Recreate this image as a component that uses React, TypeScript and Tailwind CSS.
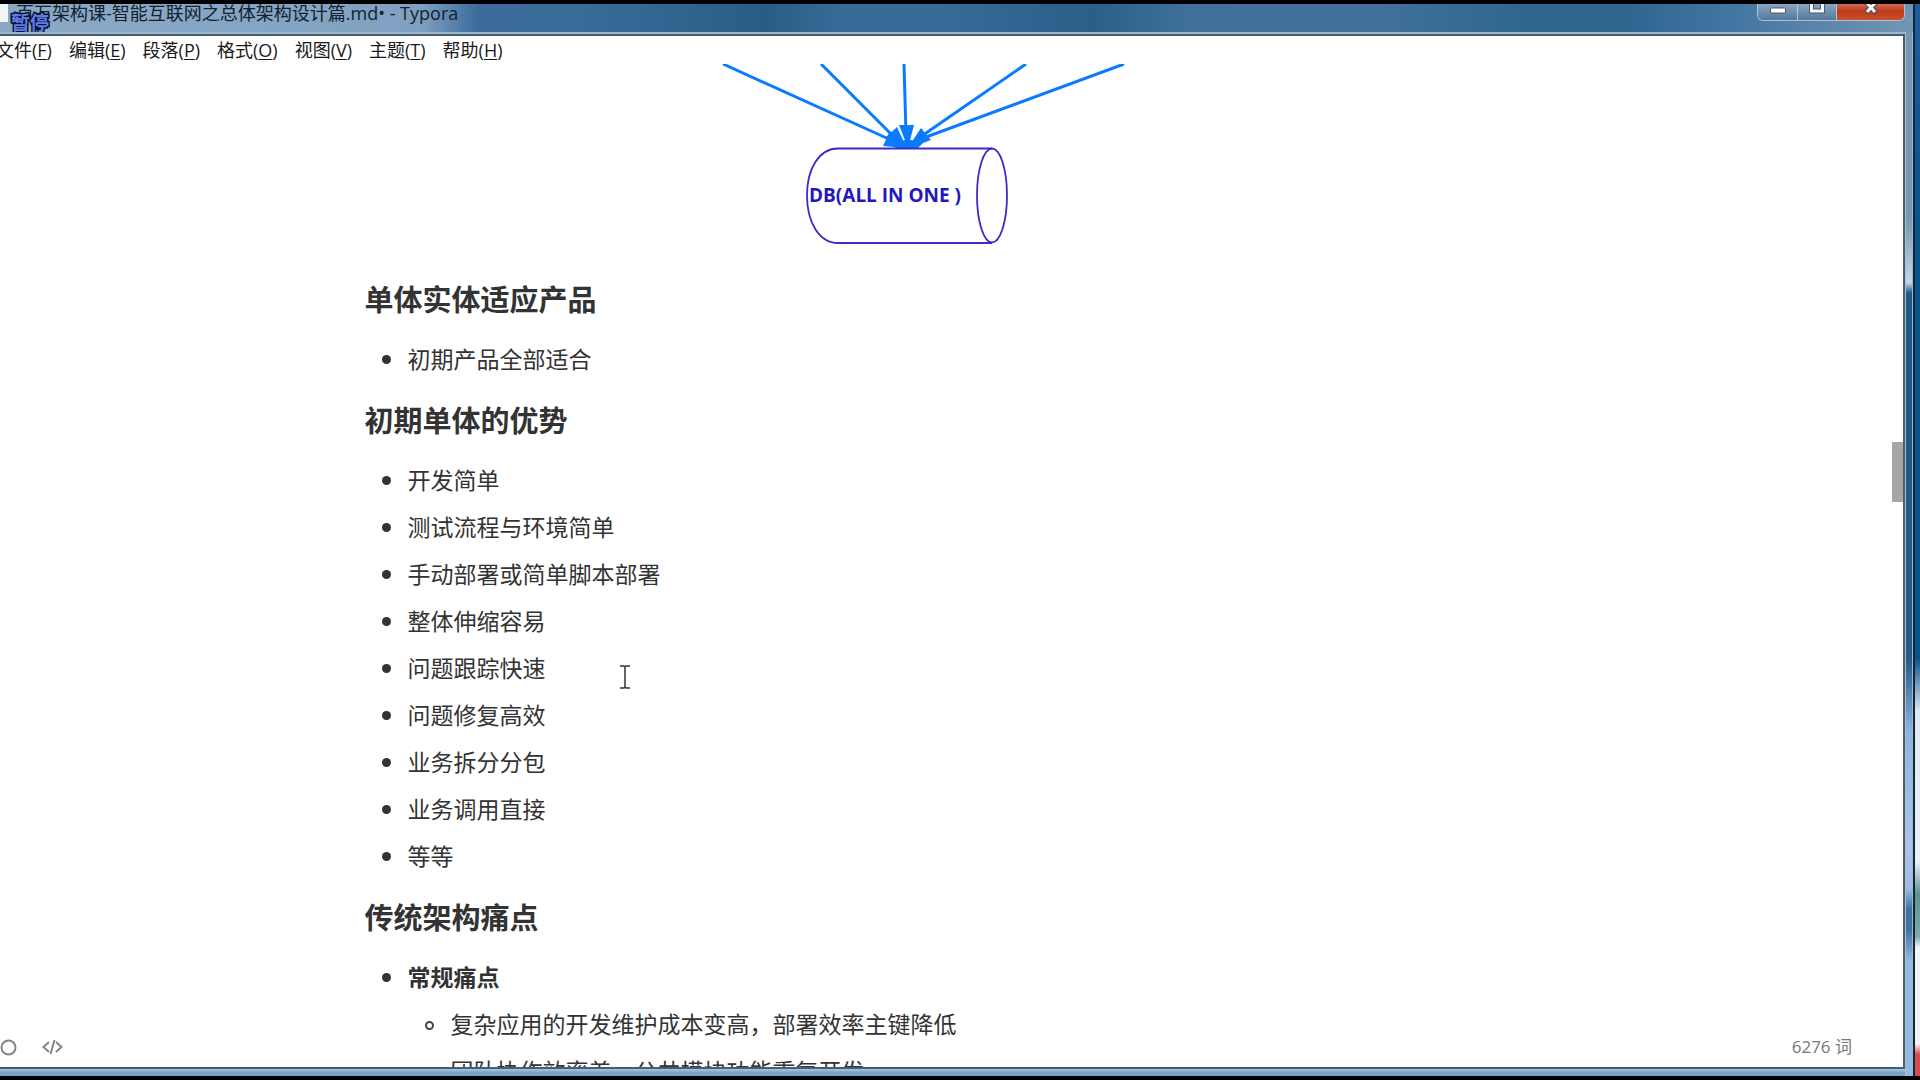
import type { ReactNode } from "react"

const menus = [
    { label: "文件", shortcut: "F" },
    { label: "编辑", shortcut: "E" },
    { label: "段落", shortcut: "P" },
    { label: "格式", shortcut: "O" },
    { label: "视图", shortcut: "V" },
    { label: "主题", shortcut: "T" },
    { label: "帮助", shortcut: "H" },
]

const advantages = [
    "开发简单",
    "测试流程与环境简单",
    "手动部署或简单脚本部署",
    "整体伸缩容易",
    "问题跟踪快速",
    "问题修复高效",
    "业务拆分分包",
    "业务调用直接",
    "等等",
]

const painPoints = ["复杂应用的开发维护成本变高，部署效率主键降低", "团队协作效率差，公共模块功能重复开发"]

const TitleBar = () => {
    return (
        <header className="relative flex h-7 shrink-0 items-start justify-between overflow-hidden bg-[linear-gradient(90deg,#8ba9c6_0%,#86a6c5_12%,#7fa0c0_22%,#3b6c9b_25%,#3a6c9a_30%,#295d86_40%,#386b98_44%,#386b98_49%,#2a5f8a_57%,#3e709b_62%,#40719c_72%,#2e6690_80%,#2e6690_85%,#4577a4_91%,#7395b3_100%)]">
            <div className="flex items-start">
                <span className="h-[18px] w-2 bg-[#f1f4f8]"></span>
                <h1 className="ml-2 whitespace-nowrap text-[18px] leading-[18px] text-[#14202e]">
                    百万架构课-智能互联网之总体架构设计篇.md• - Typora
                </h1>
            </div>
            <span className="absolute left-[11px] top-2 text-[19px] font-bold leading-[22px] text-[#5b7bf0] [-webkit-text-stroke:3px_#0d1526] [paint-order:stroke_fill]">
                暂停
            </span>
            <div className="mr-2 flex h-[17px] overflow-hidden rounded-b-md border border-t-0 border-[#a9c3d8] shadow-[inset_0_0_0_1px_#33485c]">
                <button aria-label="最小化" className="flex w-10 justify-center border-r border-[#b4c7d8] bg-linear-to-b from-[#8ba5c0] to-[#54799c]">
                    <svg width="18" height="10" viewBox="0 0 18 10">
                        <rect x="1.5" y="4" width="15" height="5" rx="1" fill="#fff" stroke="#4b5a6b" />
                    </svg>
                </button>
                <button aria-label="最大化" className="flex w-[39px] justify-center border-r border-[#b4c7d8] bg-linear-to-b from-[#8ba5c0] to-[#54799c]">
                    <svg width="18" height="11" viewBox="0 0 18 11">
                        <path d="M3.5-3v10h11V-3" fill="none" stroke="#4b5a6b" strokeWidth="5" />
                        <path d="M3.5-3v10h11V-3" fill="none" stroke="#f4f6f8" strokeWidth="3" />
                    </svg>
                </button>
                <button aria-label="关闭" className="flex w-[67px] justify-center bg-[linear-gradient(180deg,#cf6a54,#bd3a1b_45%,#c9512c)]">
                    <svg width="16" height="11" viewBox="0 0 16 11">
                        <path d="M2-3L13 9M14-3L3 9" stroke="#5a4a4c" strokeWidth="5" />
                        <path d="M3-2L12 8M13-2L4 8" stroke="#f4f6f8" strokeWidth="3" />
                    </svg>
                </button>
            </div>
        </header>
    )
}

const MenuBar = () => {
    return (
        <nav className="-ml-1 flex h-7 shrink-0 items-center gap-[17px] bg-white text-[18px] leading-[22px] text-[#1a1a1a]">
            {menus.map((menu) => (
                <button key={menu.shortcut} className="whitespace-nowrap">
                    {menu.label}(<span className="underline underline-offset-2">{menu.shortcut}</span>)
                </button>
            ))}
        </nav>
    )
}

const Diagram = () => {
    return (
        <figure className="pl-[336px]">
            <svg width="440" height="198" viewBox="0 0 440 198" className="block">
                <g fill="none" stroke="#0a7bff" strokeWidth="3">
                    <path d="M22 0L190 76" />
                    <path d="M120 0L192 72" />
                    <path d="M203 0L205 70" />
                    <path d="M325 0L215 76" />
                    <path d="M423 0L217 76" />
                </g>
                <g fill="#0a7bff">
                    <path d="M188 69L182 82L204 84z" />
                    <path d="M196 63L184 74L206 85z" />
                    <path d="M198 61L213 61L207 84z" />
                    <path d="M220 64L230 76L206 85z" />
                    <path d="M190 80L204 76H210L222 79L216 85H196z" />
                </g>
                <g fill="none" stroke="#3d2bc4" strokeWidth="1.8">
                    <path d="M291 84.5H137C118 84.5 106 105 106 131.5S118 179 137 179H291" />
                    <ellipse cx="291" cy="131.5" rx="15" ry="47" />
                </g>
                <text x="108" y="138" fontSize="19" fontWeight="700" fill="#2317bd" className="font-['Open_Sans',sans-serif]">
                    DB(ALL IN ONE )
                </text>
            </svg>
        </figure>
    )
}

const Heading = ({ children }: { children: ReactNode }) => {
    return <h3 className="flex h-[74px] items-center pt-0.5 text-[29px] font-bold leading-[40px]">{children}</h3>
}

const Item = ({ children }: { children: ReactNode }) => {
    return (
        <li className="flex h-[47px] items-center pb-0.5">
            <span className="mr-[17px] ml-px mt-0.5 size-[9px] rounded-full bg-[#333]"></span>
            {children}
        </li>
    )
}

const SubItem = ({ children }: { children: ReactNode }) => {
    return (
        <li className="flex h-[47px] items-center whitespace-nowrap pb-0.5">
            <span className="mr-[17px] ml-px mt-1 size-[9px] rounded-full border-2 border-[#444]"></span>
            {children}
        </li>
    )
}

const Article = () => {
    return (
        <article className="mx-auto w-full max-w-[1163px] text-[23px] leading-[36px] text-[#333]">
            <Diagram />
            <Heading>单体实体适应产品</Heading>
            <ul className="pl-4">
                <Item>初期产品全部适合</Item>
            </ul>
            <Heading>初期单体的优势</Heading>
            <ul className="pl-4">
                {advantages.map((text) => (
                    <Item key={text}>{text}</Item>
                ))}
            </ul>
            <Heading>传统架构痛点</Heading>
            <ul className="pl-4">
                <Item>
                    <strong>常规痛点</strong>
                </Item>
                <li>
                    <ul className="pl-[43px]">
                        {painPoints.map((text) => (
                            <SubItem key={text}>{text}</SubItem>
                        ))}
                    </ul>
                </li>
            </ul>
        </article>
    )
}

const StatusBar = () => {
    return (
        <footer className="absolute inset-x-0 bottom-2 flex h-6 items-center justify-between pr-[51px] text-[17px] leading-[24px] text-[#777]">
            <div className="flex items-center gap-[25px]">
                <button aria-label="侧边栏" className="flex">
                    <svg width="17" height="17" viewBox="0 0 17 17" fill="none" stroke="#858585" strokeWidth="2">
                        <circle cx="8.5" cy="8.5" r="7" />
                    </svg>
                </button>
                <button aria-label="源代码模式" className="flex">
                    <svg width="21" height="16" viewBox="0 0 21 16" fill="none" stroke="#858585" strokeWidth="2">
                        <path d="M7 3L1.5 8L7 13M14 3L19.5 8L14 13M12.5 1L8.5 15" />
                    </svg>
                </button>
            </div>
            <button>6276 词</button>
        </footer>
    )
}

const Cursor = () => {
    return (
        <svg width="12" height="24" viewBox="0 0 12 24" fill="none" stroke="#333" strokeWidth="1.5" className="absolute left-[619px] top-[601px]">
            <path d="M1 1H5L6 2L7 1H11M6 2V22M1 23H5L6 22L7 23H11" />
        </svg>
    )
}

export default function App() {
    return (
        <div className="flex h-screen overflow-hidden bg-black py-1 font-['Open_Sans','Noto_Sans_CJK_SC',sans-serif]">
            <div className="flex min-w-0 flex-1 flex-col">
                <TitleBar />
                <div className="flex min-h-0 flex-1">
                    <div className="flex min-w-0 flex-1 flex-col border-t-2 border-[#9db8c9]">
                        <main className="relative flex min-h-0 flex-1 flex-col overflow-hidden border-y-2 border-r-2 border-[#4a5d6e] bg-white">
                            <MenuBar />
                            <div className="relative flex min-h-0 flex-1 overflow-hidden">
                                <Article />
                                <div className="w-[11px] shrink-0 pt-[378px]">
                                    <div className="h-[60px] bg-[#a6a6a6]"></div>
                                </div>
                                <Cursor />
                            </div>
                            <StatusBar />
                        </main>
                        <div className="h-[7px] shrink-0 bg-[linear-gradient(180deg,#a9c8e0,#7ba3c8_50%)]"></div>
                    </div>
                    <div className="w-2 border-x border-l-[#a9bfce] border-r-[#9fb9ca] bg-[linear-gradient(180deg,#7797b4_0%,#7797b4_18%,#c3d9ea_24%,#1c5a8c_25%,#24598a_60%,#8cb4e0_67%,#abc4f0_78%,#9dbde8_82%,#3f74a5_84%,#3f74a5_86%,#94b9e2_89%)]"></div>
                </div>
            </div>
            <div className="w-[7px] border-l-2 border-[#12283a] bg-[linear-gradient(180deg,#1f5d9c_0%,#08548c_20%,#08548c_61%,#dfe8f4_66%,#e8f2fb_80%,#5f9290_83%,#7eabac_87%,#f0f4f8_88%,#f0f4f8_97%,#d94a4a_98%)]"></div>
        </div>
    )
}
